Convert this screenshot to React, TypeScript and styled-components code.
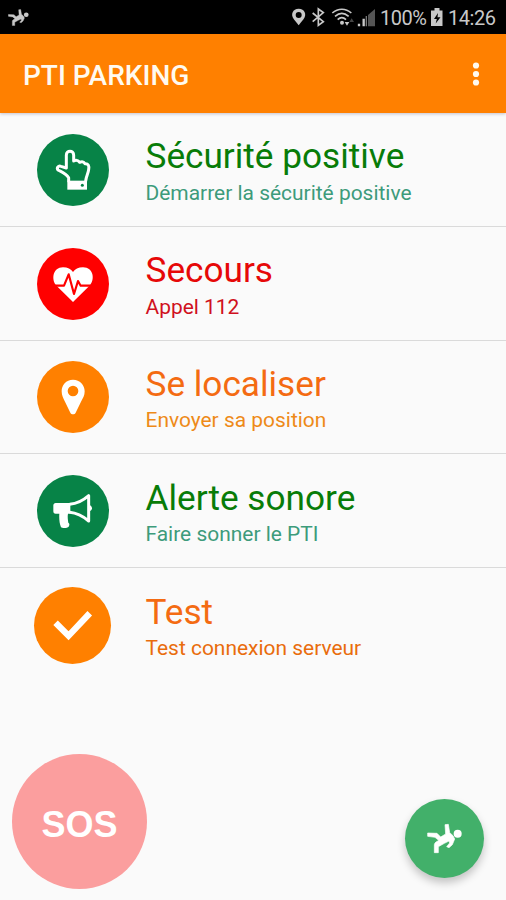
import React from "react";
import styled, { createGlobalStyle } from "styled-components";

const GlobalStyle = createGlobalStyle`
  * { box-sizing: border-box; }
  body { margin: 0; background: #fafafa; font-family: Roboto, sans-serif; }
`;

const Screen = styled.main`
  display: flex;
  flex-direction: column;
  width: 506px;
  height: 900px;
  overflow: hidden;
  background: #fafafa;
`;

const StatusBar = styled.div`
  flex: none;
  display: flex;
  align-items: center;
  justify-content: space-between;
  height: 34px;
  padding: 0 11px 0 8px;
  background: #000;
  color: #c8c8c8;
`;

const StatusGroup = styled.div`
  display: flex;
  align-items: center;
`;

const StatusText = styled.span<{ $width: number }>`
  width: ${(p) => p.$width}px;
  font-size: 20px;
  line-height: 24px;
  letter-spacing: -0.45px;
  white-space: nowrap;
  padding-top: 1px;
`;

const AppBar = styled.header`
  flex: none;
  display: flex;
  align-items: center;
  justify-content: space-between;
  height: 79px;
  padding: 0 24px 0 23px;
  background: #ff8000;
  box-shadow: 0 1px 3px rgba(60, 50, 90, 0.28);
  z-index: 1;
`;

const AppTitle = styled.h1`
  margin: 4px 0 0;
  color: #fffaf0;
  font-size: 28px;
  line-height: 32px;
  font-weight: 500;
`;

const MenuButton = styled.button`
  display: flex;
  padding: 0;
  border: 0;
  background: none;
`;

const List = styled.ul`
  flex: none;
  margin: 0;
  padding: 0;
  list-style: none;
`;

const Row = styled.li`
  display: grid;
  grid-template-columns: 145.5px 1fr;
  height: 113.8px;
  border-bottom: 1.5px solid #dadada;
  &:last-child { border-bottom-color: transparent; }
`;

const IconCell = styled.div`
  display: grid;
  place-items: center;
  padding-top: 1px;
`;

const Disc = styled.div<{ $color: string; $size: number }>`
  display: grid;
  width: ${(p) => p.$size}px;
  height: ${(p) => p.$size}px;
  border-radius: 50%;
  background: ${(p) => p.$color};
  svg { width: 100%; height: 100%; }
`;

const Labels = styled.div`
  padding-top: 22.4px;
  white-space: nowrap;
`;

const RowTitle = styled.div<{ $color: string }>`
  color: ${(p) => p.$color};
  font-size: 35.2px;
  line-height: 42px;
`;

const RowSubtitle = styled.div<{ $color: string }>`
  margin-top: 3.5px;
  color: ${(p) => p.$color};
  font-size: 20.95px;
  line-height: 25px;
`;

const Footer = styled.footer`
  flex: 1;
  display: flex;
  align-items: flex-end;
  justify-content: space-between;
  padding: 0 22px 11px 12px;
`;

const SosButton = styled.button`
  display: grid;
  place-items: center;
  width: 135px;
  height: 135px;
  padding: 6px 0 0;
  border: 0;
  border-radius: 50%;
  background: #fb9e9e;
  color: #fff;
  font: 700 36px "Liberation Sans", sans-serif;
`;

const FallButton = styled.button`
  width: 79px;
  height: 79px;
  margin-bottom: 11px;
  padding: 0;
  border: 0;
  border-radius: 50%;
  background: #42b06a;
  box-shadow: 0 5px 9px rgba(0, 0, 0, 0.22);
  svg { display: block; width: 79px; height: 79px; }
`;

const HandIcon = () => (
  <svg viewBox="51 40 216 216" fill="none" stroke="#fff" strokeWidth="9" strokeLinejoin="round" strokeLinecap="round">
    <path d="M146 181V171C138 158 125 154 114 148C109 142 115 134 123 137L139 142V103C139 88 161 88 161 103V121C168 117 175 120 179 125C186 122 192 124 195 129C205 128 208 136 206 146C205 158 199 165 197 181" />
    <path d="M142 180H201V207H142Z" fill="#fff" stroke="none" />
    <circle cx="187" cy="194" r="4.5" fill="#078347" stroke="none" />
  </svg>
);

const HeartIcon = () => (
  <svg viewBox="51 35 216 216">
    <path fill="#fff" d="M159 197L108 147C94 129 98 94 129 93C143 93 153 99 159 107C165 99 175 93 189 93C221 94 225 129 210 147Z" />
    <path fill="none" stroke="#f00" strokeWidth="6.5" strokeLinejoin="round" d="M94 148H132L146 114L162 173L174 134L182 148H224" />
  </svg>
);

const PinIcon = () => (
  <svg viewBox="51 33 216 216">
    <path fill="#fff" fillRule="evenodd" d="M159 89C138 89 125 105 125 124C125 137 130 145 135 155L151 188C154 194 164 194 167 188L183 155C189 144 194 137 194 124C194 105 180 89 159 89ZM159 107A16 16 0 1 1 159 139A16 16 0 0 1 159 107Z" />
  </svg>
);

const HornIcon = () => (
  <svg viewBox="51 44 216 216">
    <path fill="#fff" d="M107 128H151V160H144C142 170 144 180 145 187C149 190 149 193 146 199C142 204 127 204 123 201C118 190 117 172 118 160H107C102 160 100 157 100 153V135C100 131 103 128 107 128Z" />
    <path fill="none" stroke="#fff" strokeWidth="9" strokeLinejoin="round" d="M149 132C171 130 189 121 206 106V182C188 167 171 158 149 156" />
    <path fill="#fff" d="M208 134C217 136 220 149 208 153Z" />
  </svg>
);

const CheckIcon = () => (
  <svg viewBox="42 33 232 232">
    <path fill="none" stroke="#fff" strokeWidth="19" d="M107 141L146 180L210 112" />
  </svg>
);

const Figure = () => (
  <>
    <circle cx="204" cy="161" r="12" fill="currentColor" />
    <path fill="currentColor" stroke="currentColor" strokeWidth="2" strokeLinejoin="round" d="M166 134L176 133L180 158L190 167L195 177L188 194L178 203L171 200L180 189L178 183L164 190L146 200V218H134V194C135 187 142 185 147 181L136 172L114 169V159L142 160L153 171L168 162Z" />
  </>
);

const ITEMS = [
  { title: "Sécurité positive", subtitle: "Démarrer la sécurité positive", disc: "#078347", size: 72, titleColor: "#087c08", subColor: "#3d9b7b", Icon: HandIcon },
  { title: "Secours", subtitle: "Appel 112", disc: "#ff0000", size: 72, titleColor: "#e60808", subColor: "#d01020", Icon: HeartIcon },
  { title: "Se localiser", subtitle: "Envoyer sa position", disc: "#ff8000", size: 72, titleColor: "#f46b12", subColor: "#ee8a18", Icon: PinIcon },
  { title: "Alerte sonore", subtitle: "Faire sonner le PTI", disc: "#078347", size: 72, titleColor: "#087c08", subColor: "#3d9b7b", Icon: HornIcon },
  { title: "Test", subtitle: "Test connexion serveur", disc: "#ff8000", size: 77, titleColor: "#f46b12", subColor: "#e96c0c", Icon: CheckIcon },
];

const StatusIcons = () => (
  <svg width="100" height="34" viewBox="0 0 300 102" fill="none" stroke="#c8c8c8">
    <path d="M56 76L41 57C31 43 38 26 56 26C74 26 81 43 71 57Z" fill="#c8c8c8" stroke="none" />
    <circle cx="56" cy="45" r="9" fill="#000" stroke="none" />
    <path strokeWidth="5" d="M98 39L130 65L115 76V27L130 38L98 65" />
    <path strokeWidth="5" d="M157 39C174 24 197 24 214 39M165 49C178 38 193 38 206 49M173 59C181 51 190 51 198 59" />
    <circle cx="186" cy="68" r="6" fill="#c8c8c8" stroke="none" />
    <path d="M194 66L201 77L208 66Z" fill="#c8c8c8" stroke="none" />
    <path d="M208 66L215 55L222 66Z" fill="#444" stroke="none" />
    <path strokeWidth="7" d="M237 71V79M251 56V79" />
    <path d="M264 45L285 27V79H264Z" fill="#555" stroke="none" />
    <path strokeWidth="4" d="M259 48V79" stroke="#777" />
  </svg>
);

export default function App() {
  return (
    <Screen>
      <GlobalStyle />
      <StatusBar>
        <svg width="21" height="17" viewBox="112 130 106 90" preserveAspectRatio="none">
          <Figure />
        </svg>
        <StatusGroup>
          <StatusIcons />
          <StatusText $width={50}>100%</StatusText>
          <svg width="18" height="20" viewBox="0 0 18 20">
            <path fill="#c8c8c8" d="M4.5 1H9.5V3.5H12.5V19H1V3.5H4.5Z" />
            <path fill="#000" d="M8 6L4 12H6.8L5.7 16.5L10.5 10.2H7.5Z" />
          </svg>
          <StatusText $width={47}>14:26</StatusText>
        </StatusGroup>
      </StatusBar>
      <AppBar>
        <AppTitle>PTI PARKING</AppTitle>
        <MenuButton aria-label="Menu">
          <svg width="12" height="24" viewBox="0 0 12 24" fill="#fffaf0">
            <circle cx="6" cy="3.5" r="3.1" />
            <circle cx="6" cy="12" r="3.1" />
            <circle cx="6" cy="20.5" r="3.1" />
          </svg>
        </MenuButton>
      </AppBar>
      <List>
        {ITEMS.map(({ title, subtitle, disc, size, titleColor, subColor, Icon }) => (
          <Row key={title}>
            <IconCell>
              <Disc $color={disc} $size={size}>
                <Icon />
              </Disc>
            </IconCell>
            <Labels>
              <RowTitle $color={titleColor}>{title}</RowTitle>
              <RowSubtitle $color={subColor}>{subtitle}</RowSubtitle>
            </Labels>
          </Row>
        ))}
      </List>
      <Footer>
        <SosButton>SOS</SosButton>
        <FallButton aria-label="Chute">
          <svg viewBox="46 57 237 237" color="#fff">
            <Figure />
          </svg>
        </FallButton>
      </Footer>
    </Screen>
  );
}
